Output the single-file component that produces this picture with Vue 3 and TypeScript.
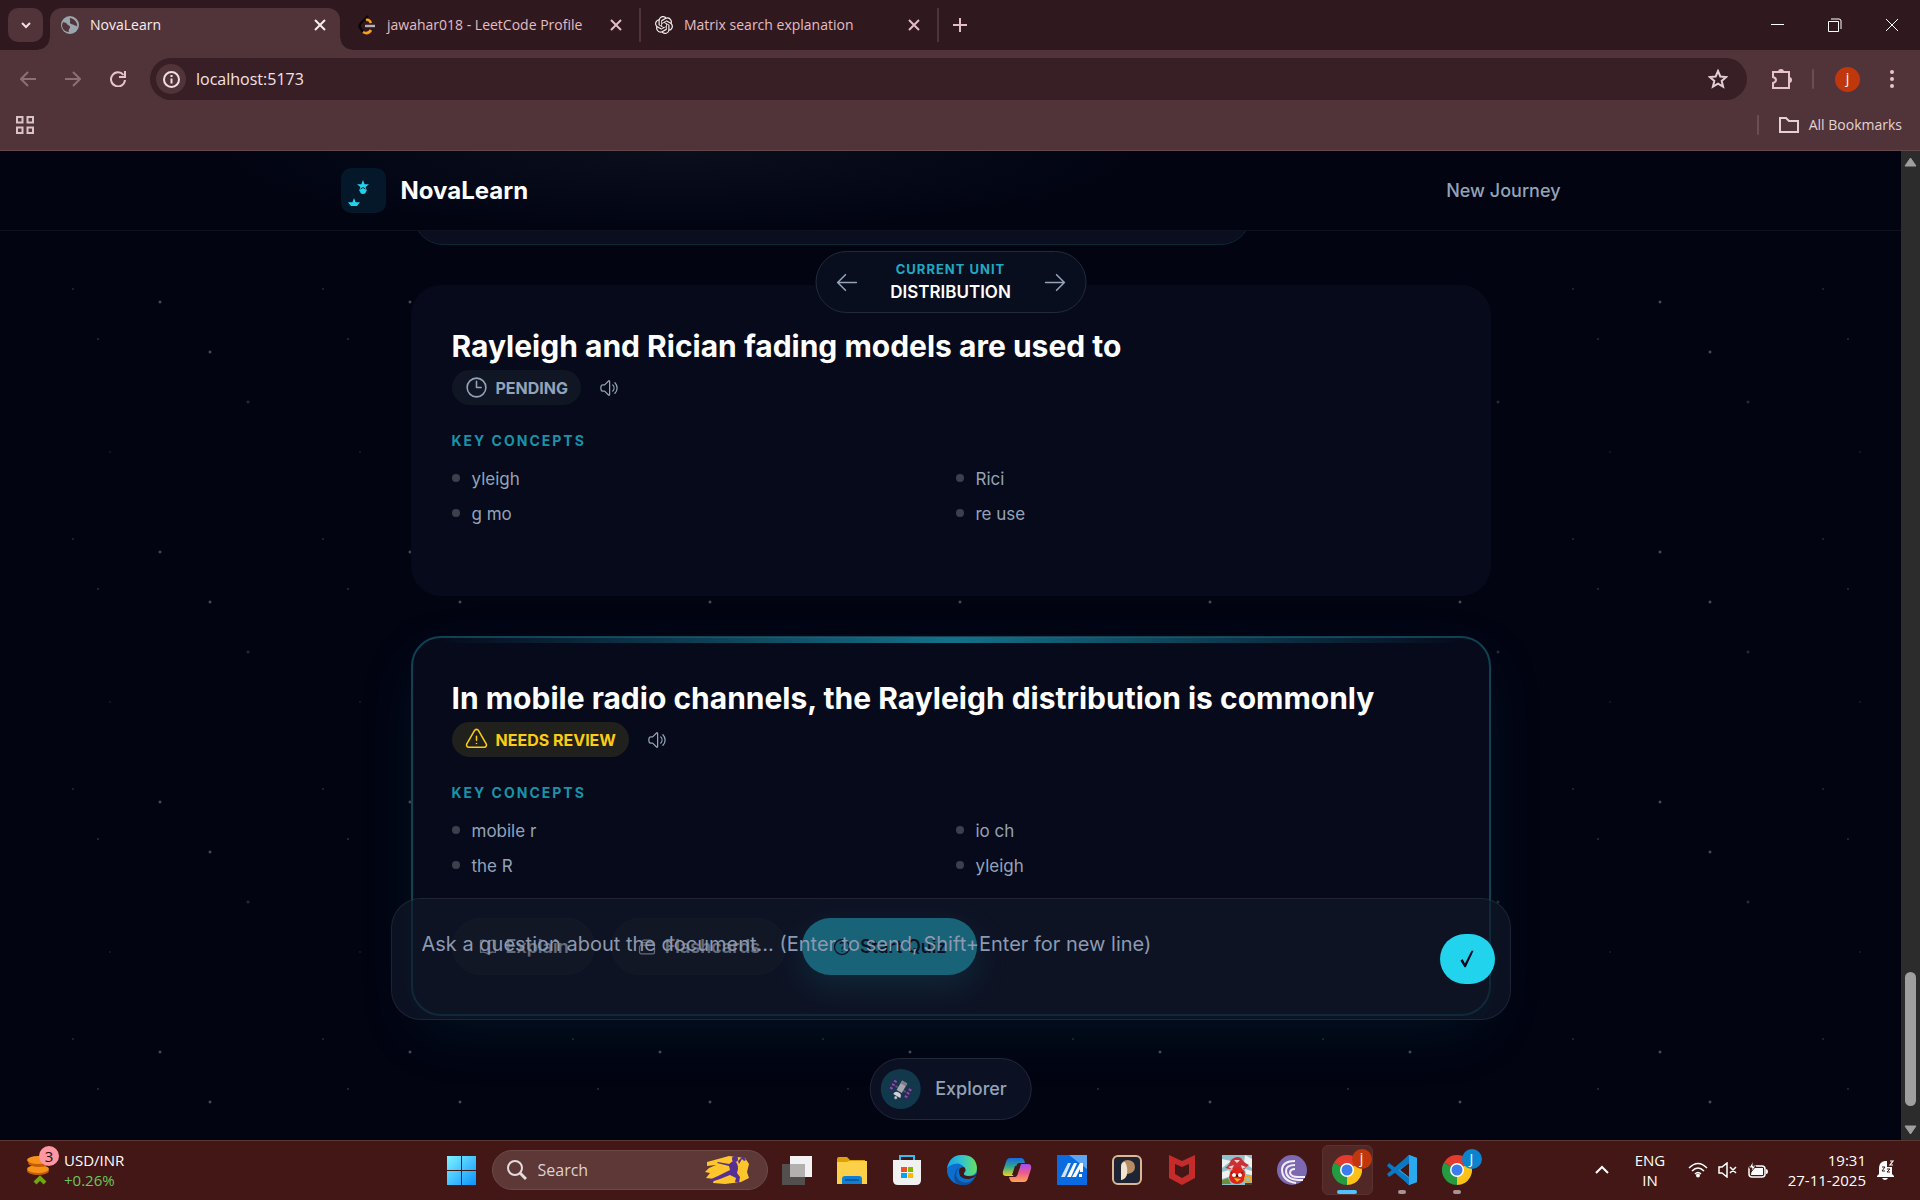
<script setup lang="ts">
import { ref } from 'vue'

interface Tab { id: string; title: string; active: boolean }
interface StudyCard {
  id: string
  title: string
  status: 'pending' | 'review'
  label: string
  concepts: string[]
  active: boolean
}

const tabs: Tab[] = [
  { id: 'nova', title: 'NovaLearn', active: true },
  { id: 'leet', title: 'jawahar018 - LeetCode Profile', active: false },
  { id: 'gpt', title: 'Matrix search explanation', active: false },
]

const cards: StudyCard[] = [
  {
    id: 'fading',
    title: 'Rayleigh and Rician fading models are used to',
    status: 'pending',
    label: 'PENDING',
    concepts: ['yleigh', 'Rici', 'g mo', 're use'],
    active: false,
  },
  {
    id: 'channels',
    title: 'In mobile radio channels, the Rayleigh distribution is commonly',
    status: 'review',
    label: 'NEEDS REVIEW',
    concepts: ['mobile r', 'io ch', 'the R', 'yleigh'],
    active: true,
  },
]

const icons = {
  clock: 'M12 6v6h4.5m4.5 0a9 9 0 1 1-18 0 9 9 0 0 1 18 0Z',
  warning: 'M12 9v3.75m-9.303 3.376c-.866 1.5.217 3.374 1.948 3.374h14.71c1.73 0 2.813-1.874 1.948-3.374L13.949 3.378c-.866-1.5-3.032-1.5-3.898 0L2.697 16.126ZM12 15.75h.007v.008H12v-.008Z',
  speaker: 'M19.114 5.636a9 9 0 0 1 0 12.728M16.463 8.288a5.25 5.25 0 0 1 0 7.424M6.75 8.25l4.72-4.72a.75.75 0 0 1 1.28.53v15.88a.75.75 0 0 1-1.28.53l-4.72-4.72H4.51c-.88 0-1.704-.507-1.938-1.354A9.009 9.009 0 0 1 2.25 12c0-.83.112-1.633.322-2.396C2.806 8.756 3.63 8.25 4.51 8.25H6.75Z',
  left: 'M10.5 19.5 3 12m0 0 7.5-7.5M3 12h18',
  right: 'M13.5 4.5 21 12m0 0-7.5 7.5M21 12H3',
  book: 'M12 6.042A8.967 8.967 0 0 0 6 3.75c-1.052 0-2.062.18-3 .512v14.25A8.987 8.987 0 0 1 6 18c2.305 0 4.408.867 6 2.292m0-14.25a8.966 8.966 0 0 1 6-2.292c1.052 0 2.062.18 3 .512v14.25A8.987 8.987 0 0 0 18 18a8.967 8.967 0 0 0-6 2.292m0-14.25v14.25',
  stack: 'M6 6.878V6a2.25 2.25 0 0 1 2.25-2.25h7.5A2.25 2.25 0 0 1 18 6v.878m-12 0c.235-.083.487-.128.75-.128h10.5c.263 0 .515.045.75.128m-12 0A2.25 2.25 0 0 0 4.5 9v.878m13.5-3A2.25 2.25 0 0 1 19.5 9v.878m0 0a2.246 2.246 0 0 0-.75-.128H5.25c-.263 0-.515.045-.75.128m15 0A2.25 2.25 0 0 1 21 12v6a2.25 2.25 0 0 1-2.25 2.25H5.25A2.25 2.25 0 0 1 3 18v-6c0-.98.626-1.813 1.5-2.122',
  question: 'M9.879 7.519c1.171-1.025 3.071-1.025 4.242 0 1.172 1.025 1.172 2.687 0 3.712-.203.179-.43.326-.67.442-.745.361-1.45.999-1.45 1.827v.75M21 12a9 9 0 1 1-18 0 9 9 0 0 1 18 0Zm-9 5.25h.008v.008H12v-.008Z',
}

const address = ref('localhost:5173')
const question = ref('')
</script>

<template>
  <div class="desktop">
    <div class="tabstrip">
      <button class="tab-search" aria-label="Search tabs">
        <svg width="14" height="14" viewBox="0 0 14 14"><path d="M3 5l4 4 4-4" class="stroke-2" /></svg>
      </button>
      <div v-for="tab in tabs" :key="tab.id" class="tab" :class="{ 'tab-active': tab.active }">
        <svg v-if="tab.id === 'nova'" width="18" height="18" viewBox="0 0 18 18">
          <circle cx="9" cy="9" r="9" fill="#9aa5ad" />
          <path d="M2 6c2 1 3 0 4 2s3 1 3 3-2 2-1 5c-4 0-7-3-7-7z" fill="#503439" />
          <path d="M9 2c-1 2 1 2 0 4s3 2 4 3 3 0 3 2c1-4-2-8-7-9z" fill="#503439" />
        </svg>
        <svg v-else-if="tab.id === 'leet'" width="18" height="20" viewBox="0 0 18 20">
          <path d="M10 1L3 8q-3 3 0 6l2 3" fill="none" stroke="#0b0708" stroke-width="2.4" />
          <path d="M8 5q3-1 5 3M5 17q5 3 8-2" fill="none" stroke="#f5a11a" stroke-width="2.6" />
          <path d="M7 11h10" stroke="#b6b3b4" stroke-width="2.4" />
        </svg>
        <svg v-else width="18" height="18" viewBox="0 0 24 24">
          <path fill="#f6eef0" d="M22.28 9.82a5.98 5.98 0 0 0-.52-4.91 6.05 6.05 0 0 0-6.51-2.9A6.07 6.07 0 0 0 4.98 4.18a5.98 5.98 0 0 0-4 2.9 6.05 6.05 0 0 0 .74 7.1 5.98 5.98 0 0 0 .51 4.91 6.05 6.05 0 0 0 6.51 2.9A5.98 5.98 0 0 0 13.26 24a6.06 6.06 0 0 0 5.77-4.21 5.99 5.99 0 0 0 4-2.9 6.06 6.06 0 0 0-.75-7.07zm-9.02 12.61a4.48 4.48 0 0 1-2.88-1.04l.14-.08 4.78-2.76a.8.8 0 0 0 .39-.68v-6.74l2.02 1.17a.07.07 0 0 1 .04.05v5.58a4.5 4.5 0 0 1-4.49 4.5zM3.6 18.3a4.47 4.47 0 0 1-.54-3.01l.15.08 4.78 2.76a.77.77 0 0 0 .78 0l5.84-3.37v2.33a.08.08 0 0 1-.03.06L9.74 19.95a4.5 4.5 0 0 1-6.14-1.65zM2.34 7.9a4.49 4.49 0 0 1 2.37-1.97v5.67a.77.77 0 0 0 .39.68l5.81 3.35-2.02 1.17a.08.08 0 0 1-.07 0l-4.83-2.79A4.5 4.5 0 0 1 2.34 7.9zm16.6 3.85L13.1 8.36l2.02-1.16a.08.08 0 0 1 .07 0l4.83 2.79a4.49 4.49 0 0 1-.68 8.1v-5.68a.79.79 0 0 0-.4-.66zm2.01-3.02l-.14-.09-4.77-2.78a.78.78 0 0 0-.79 0L9.41 9.23V6.9a.07.07 0 0 1 .03-.06l4.83-2.79a4.5 4.5 0 0 1 6.68 4.66zM8.31 12.86l-2.02-1.16a.08.08 0 0 1-.04-.06V6.07a4.5 4.5 0 0 1 7.38-3.45l-.14.08L8.7 5.46a.8.8 0 0 0-.39.68zm1.09-2.36l2.6-1.5 2.61 1.5v3l-2.6 1.5-2.6-1.5z" />
        </svg>
        <span class="tab-title">{{ tab.title }}</span>
        <button class="tab-close" :aria-label="'Close ' + tab.title">
          <svg width="12" height="12" viewBox="0 0 12 12"><path d="M1 1l10 10M11 1L1 11" class="stroke-2" /></svg>
        </button>
      </div>
      <button class="new-tab" aria-label="New tab">
        <svg width="14" height="14" viewBox="0 0 14 14"><path d="M7 0v14M0 7h14" class="stroke-2" /></svg>
      </button>
      <div class="window-controls">
        <button aria-label="Minimize"><svg width="14" height="14" viewBox="0 0 14 14"><path d="M0 6.5h13" /></svg></button>
        <button aria-label="Restore"><svg width="14" height="14" viewBox="0 0 14 14"><path d="M.5 3.5h10v10h-10zM3 1h8q2 0 2 2v8" /></svg></button>
        <button aria-label="Close"><svg width="14" height="14" viewBox="0 0 14 14"><path d="M1 1l12 12M13 1L1 13" /></svg></button>
      </div>
    </div>

    <div class="toolbar">
      <button class="tool dim" aria-label="Back"><svg width="16" height="16" viewBox="0 0 16 16"><path d="M16 8H2M8 1L1 8l7 7" class="stroke-2" /></svg></button>
      <button class="tool dim" aria-label="Forward"><svg width="16" height="16" viewBox="0 0 16 16"><path d="M0 8h14M8 1l7 7-7 7" class="stroke-2" /></svg></button>
      <button class="tool" aria-label="Reload"><svg width="16" height="16" viewBox="0 0 16 16"><path d="M13.5 4A7 7 0 1 0 15 9M15 0v6H9" class="stroke-2" /></svg></button>
      <div class="omnibox">
        <button class="site-info" aria-label="Site information">
          <svg width="17" height="17" viewBox="0 0 17 17"><circle cx="8.500" cy="8.500" r="7.500" class="stroke-2" /><path d="M8.500 7.500v5M8.500 4v2" class="stroke-2" /></svg>
        </button>
        <input v-model="address" aria-label="Address" />
        <button class="star" aria-label="Bookmark this tab">
          <svg width="20" height="20" viewBox="0 0 20 20"><path d="M10 2l2.300 5.500 5.900.5-4.500 3.900 1.400 5.800-5.100-3.100-5.100 3.100 1.400-5.800L1.800 8l5.900-.5z" class="stroke-2" /></svg>
        </button>
      </div>
      <button class="tool extension" aria-label="Extensions">
        <svg width="22" height="22" viewBox="0 0 22 22"><path d="M2 4h16v16H2v-5q3-1 3-3T2 9z" class="stroke-2" /><path d="M7 4q0-3 3-3t3 3zM18 9q3 0 3 3t-3 3z" fill="currentColor" /></svg>
      </button>
      <span class="divider"></span>
      <button class="avatar" aria-label="Profile">j</button>
      <button class="tool more" aria-label="Menu">
        <svg width="6" height="20" viewBox="0 0 6 20"><g fill="currentColor"><circle cx="3" cy="3" r="2" /><circle cx="3" cy="10" r="2" /><circle cx="3" cy="17" r="2" /></g></svg>
      </button>
    </div>

    <div class="bookmarks">
      <button class="tool apps" aria-label="Apps">
        <svg width="18" height="18" viewBox="0 0 18 18"><path d="M1 1h5.500v5.500H1zM11.500 1H17v5.500h-5.500zM1 11.500h5.500V17H1zM11.500 11.500H17V17h-5.500z" class="stroke-2" /></svg>
      </button>
      <span class="divider"></span>
      <button class="all-bookmarks">
        <svg width="22" height="18" viewBox="0 0 22 18"><path d="M2 2h6l3 3h9v11H2z" class="stroke-2" /></svg>
        All Bookmarks
      </button>
    </div>

    <div class="browser-page">
      <div class="viewport">
        <header class="site-header">
          <div class="site-header-inner">
            <a href="#" class="brand">
              <span class="brand-mark">
                <svg width="45" height="45" viewBox="0 0 45 45" fill="#22d3ee">
                  <path d="M22 12l1.600 4.200H28l-3.300 2.800 1.300 4.500-4-2.500-4 2.500 1.300-4.500L16 16.200h4.400z" />
                  <circle cx="22" cy="23" r="3" />
                  <path d="M19.500 21q2.500-3 5 0" fill="none" stroke="#06192a" />
                  <path d="M13 30l1.600 4.200H19l-3 3.800h-6l-3-3.800h4.400z" />
                </svg>
              </span>
              NovaLearn
            </a>
            <a href="#" class="nav-link">New Journey</a>
          </div>
        </header>

        <main class="content">
          <div class="bubble"></div>
          <section v-for="card in cards" :key="card.id" class="card" :class="{ 'card-active': card.active }">
            <h2>{{ card.title }}</h2>
            <div class="meta">
              <span class="badge" :class="card.status">
                <svg width="25" height="25" viewBox="0 0 24 24"><path :d="card.status === 'pending' ? icons.clock : icons.warning" class="outline" /></svg>
                {{ card.label }}
              </span>
              <button class="listen" aria-label="Read aloud">
                <svg width="20" height="20" viewBox="0 0 24 24"><path :d="icons.speaker" class="outline" /></svg>
              </button>
            </div>
            <h3>KEY CONCEPTS</h3>
            <ul>
              <li v-for="concept in card.concepts" :key="concept">{{ concept }}</li>
            </ul>
            <div v-if="card.active" class="actions">
              <button class="ghost"><svg width="20" height="20" viewBox="0 0 24 24"><path :d="icons.book" class="outline" /></svg>Explain</button>
              <button class="ghost"><svg width="20" height="20" viewBox="0 0 24 24"><path :d="icons.stack" class="outline" /></svg>Flashcards</button>
              <button class="primary"><svg width="20" height="20" viewBox="0 0 24 24"><path :d="icons.question" class="outline" /></svg>Start Quiz</button>
            </div>
          </section>
        </main>

        <nav class="unit-pill" aria-label="Units">
          <button aria-label="Previous unit"><svg width="25" height="25" viewBox="0 0 24 24"><path :d="icons.left" class="outline" /></svg></button>
          <div class="unit-text">
            <span class="unit-label">CURRENT UNIT</span>
            <span class="unit-name">DISTRIBUTION</span>
          </div>
          <button aria-label="Next unit"><svg width="25" height="25" viewBox="0 0 24 24"><path :d="icons.right" class="outline" /></svg></button>
        </nav>

        <form class="composer" @submit.prevent>
          <textarea v-model="question" aria-label="Question" placeholder="Ask a question about the document... (Enter to send, Shift+Enter for new line)"></textarea>
          <button class="send" aria-label="Send">
            <svg width="16" height="18" viewBox="0 0 18 22"><path d="M1 13l2.500-2 3 5.500L14.500 1H17L7.500 21H6z" fill="#020617" /></svg>
          </button>
        </form>

        <button class="explorer">
          <span class="explorer-icon">
            <svg width="24" height="24" viewBox="0 0 24 24">
              <g transform="rotate(30 12 12)">
                <path d="M1 6h5v12H1zM18 6h5v12h-5z" fill="#33254f" />
                <path d="M2 7h3v2H2zM2 11h3v2H2zM2 15h3v2H2zM19 7h3v2h-3zM19 11h3v2h-3zM19 15h3v2h-3z" fill="#7a55b5" />
                <path d="M6 11h3v2H6zM15 11h3v2h-3z" fill="#5a5166" />
                <path d="M9 4h6v11H9z" fill="#a9a4b0" /><path d="M9 4h6v3H9z" fill="#7f7a88" />
                <path d="M8 20q0-4 4-4t4 4z" fill="#d5d0dc" /><circle cx="12" cy="22" r="1.500" fill="#b9b3c2" />
              </g>
            </svg>
          </span>
          Explorer
        </button>
      </div>

      <div class="scrollbar" aria-hidden="true">
        <svg width="13" height="10" viewBox="0 0 13 10"><path d="M6.500 1L12 9H1z" class="scroll-arrow" /></svg>
        <span class="thumb"></span>
        <svg width="13" height="10" viewBox="0 0 13 10"><path d="M6.500 9L12 1H1z" class="scroll-arrow" /></svg>
      </div>
    </div>

    <footer class="taskbar">
      <button class="widget">
        <span class="coins">
          <svg width="24" height="30" viewBox="0 0 24 30">
            <ellipse cx="12" cy="16" rx="11" ry="4" fill="#c65c05" /><ellipse cx="12" cy="14" rx="11" ry="4" fill="#f6921a" />
            <ellipse cx="13" cy="8" rx="11" ry="4" fill="#c65c05" /><ellipse cx="12" cy="5" rx="11" ry="4" fill="#f6921a" />
            <path d="M9 28l5-5 5 5" fill="none" stroke="#6fa80c" stroke-width="4" />
          </svg>
          <span class="count">3</span>
        </span>
        <span class="rate"><span>USD/INR</span><span class="up">+0.26%</span></span>
      </button>

      <div class="apps-row">
        <button class="app start" aria-label="Start">
          <svg width="30" height="30" viewBox="0 0 30 30">
            <defs><linearGradient id="win" x1="0" y1="0" x2="1" y2="1"><stop stop-color="#7ff3ff" /><stop offset="1" stop-color="#0a94ff" /></linearGradient></defs>
            <path d="M1 1h14v14H1zM16 1h14v14H16zM1 16h14v14H1zM16 16h14v14H16z" fill="url(#win)" />
          </svg>
        </button>
        <label class="search">
          <svg width="20" height="20" viewBox="0 0 20 20"><circle cx="8" cy="8" r="7" fill="none" stroke="#e3dcdc" stroke-width="2" /><path d="M13 13l6 6" stroke="#e3dcdc" stroke-width="3" /></svg>
          <input type="text" placeholder="Search" />
          <svg width="46" height="32" viewBox="0 0 46 32">
            <path d="M3 8l22-6 16 2 4 6-2 8 2 6-8 4-16 2-12-1 1-4-8-1 4-5-5-1 4-4 7-3-9 1z" fill="#ffc52d" />
            <circle cx="31" cy="5" r="3" fill="#553092" />
            <path d="M29 7q5 0 5 8l-1 4 3 4-1 6-4-1 1-4-6-3-10 4-9 3-2-2 9-4 12-6-1-4-12-3 1-1 11 2zM34 7l5-5 3 4-2 1-2-2-3 5z" fill="#553092" />
          </svg>
        </label>
        <button class="app" aria-label="Task view">
          <svg width="30" height="30" viewBox="0 0 30 30"><path d="M8 1h22v21H8z" fill="#f2f2f2" /><path d="M0 9h23v21H0z" fill="#555" fill-opacity=".9" /><path d="M8 9h15v13H8z" fill="#b3b0b0" /></svg>
        </button>
        <button class="app" aria-label="File Explorer">
          <svg width="30" height="30" viewBox="0 0 30 30"><path d="M0 4q0-2 2-2h8l3 3h15v6H0z" fill="#e0a106" /><path d="M0 7h10l2-1h18v23H0z" fill="#fdd04a" /><path d="M5 29v-5q0-3 3-3h14q3 0 3 3v5z" fill="#0f7fd6" /><path d="M8 25h14" stroke="#0a4f91" stroke-width="1.500" /></svg>
        </button>
        <button class="app" aria-label="Store">
          <svg width="30" height="30" viewBox="0 0 30 30"><path d="M8 6V1h14v5" fill="none" stroke="#35bdf2" stroke-width="2" /><path d="M1 5h28v20q0 5-5 5H6q-5 0-5-5z" fill="#f1f1f1" /><path d="M9 12h6v5H9z" fill="#f25022" /><path d="M16 12h5v5h-5z" fill="#7fba00" /><path d="M9 18h6v5H9z" fill="#00a4ef" /><path d="M16 18h5v5h-5z" fill="#ffb900" /></svg>
        </button>
        <button class="app" aria-label="Edge">
          <svg width="30" height="30" viewBox="0 0 30 30">
            <defs><linearGradient id="edge"><stop stop-color="#1c9fe0" /><stop offset=".5" stop-color="#32c4cf" /><stop offset="1" stop-color="#68e05a" /></linearGradient></defs>
            <circle cx="15" cy="15" r="15" fill="#0b6fd0" />
            <path d="M0 13Q3 0 15 0q14 0 15 13 0 8-9 8-5 0-4-3 3-3 0-6-4-5-10-3-4 1-7 4z" fill="url(#edge)" />
            <path d="M12 12q-6 8 1 14 7 4 14-2-5 8-14 6Q5 27 8 18q1-4 4-6z" fill="#0f4f9c" />
            <path d="M17 12q3 3 0 6-1 3 4 3 5 1 9-2-2 4-8 5-9 0-10-6-1-6 5-6z" fill="#421715" />
          </svg>
        </button>
        <button class="app" aria-label="Copilot">
          <svg width="30" height="30" viewBox="0 0 30 30">
            <defs>
              <linearGradient id="cop1" x1="0" y1="0" x2="0" y2="1"><stop stop-color="#1668e0" /><stop offset=".5" stop-color="#34a98c" /><stop offset="1" stop-color="#f4d21b" /></linearGradient>
              <linearGradient id="cop2" x1="0" y1="0" x2="0" y2="1"><stop stop-color="#a14df0" /><stop offset=".5" stop-color="#ee5a8c" /><stop offset="1" stop-color="#ffa552" /></linearGradient>
            </defs>
            <path d="M8 3h11q3 0 4 5h-6q-2 0-3 4l-3 9H4q-4 0-3-5L4 7q1-4 4-4z" fill="url(#cop1)" />
            <path d="M22 27H11q-3 0-4-5h6q2 0 3-4l3-9h7q4 0 3 5l-3 9q-1 4-4 4z" fill="url(#cop2)" />
            <path d="M13 11h5l-3 9h-5z" fill="#421715" />
          </svg>
        </button>
        <button class="app" aria-label="MyASUS">
          <svg width="30" height="30" viewBox="0 0 30 30"><path d="M0 0h30v30H0z" fill="#0a6be0" /><path d="M12 0h18v14z" fill="#5ba7f3" /><path d="M4 22l7-14h3L8 22z" fill="#cfe4fb" /><path d="M10 22l7-14h3l-6 14z" fill="#fff" /><path d="M15 22l8-14h3v9h-3v-3l-4 8zM22 19h3v3h-3z" fill="#fff" /></svg>
        </button>
        <button class="app" aria-label="Media player">
          <svg width="30" height="30" viewBox="0 0 30 30"><rect x="1" y="1" width="28" height="28" rx="5" fill="#1d2433" stroke="#dcb795" stroke-width="2" /><path d="M9 25V12q0-7 7-7 7 1 7 7 0 6-8 7-1 5-6 6z" fill="#b98b63" /><path d="M9 25V12q0-5 4-5 3 5 2 12-1 5-6 6z" fill="#f3e3cf" /></svg>
        </button>
        <button class="app" aria-label="McAfee">
          <svg width="30" height="30" viewBox="0 0 30 30"><path d="M2 0l13 6 13-6v23l-13 7-13-7zM8 9v10l7 4 7-4V9l-7 3z" fill="#c52b2b" fill-rule="evenodd" /></svg>
        </button>
        <button class="app" aria-label="Game">
          <svg width="30" height="30" viewBox="0 0 30 30">
            <path d="M0 0h30v30H0z" fill="#8fc0cb" />
            <path d="M0 4l9 2-9 7zM23 0l7 4v9l-8-5zM0 17l7-2 2 6-9 3zM23 14l7 2v4l-6-1z" fill="#eef1f0" />
            <path d="M3 13q4-2 6-8 5-5 10-2 3 5 8 7l-5 4H8z" fill="#c9303a" />
            <path d="M12 5h6l-3 3zM6 12l6-2-2 4zM19 10l5 2-4 2z" fill="#f1d5bd" />
            <path d="M7 22q1-9 9-10 8 2 7 10-1 7-8 7-7 0-8-7z" fill="#dc241b" />
            <path d="M9 17l6 3 6-3-1 2-5 3-5-3z" fill="#2c0f10" /><circle cx="12" cy="20" r="2" fill="#fff" /><circle cx="18" cy="20" r="2" fill="#fff" />
            <path d="M12 23l7 1-4 3z" fill="#f5b21b" />
            <circle cx="26" cy="24" r="3" fill="none" stroke="#e8a823" stroke-width="2" /><path d="M0 25l6-2 3 6H0z" fill="#6e8c3d" /><path d="M23 28h7v2h-7z" fill="#4a3b2c" />
          </svg>
        </button>
        <button class="app" aria-label="BitTorrent">
          <svg width="30" height="30" viewBox="0 0 30 30"><circle cx="15" cy="15" r="15" fill="#7c69b1" /><g fill="none" stroke="#f1eef8" stroke-width="2"><path d="M18 6Q6 6 5 14q0 12 14 14M18 10q-9 0-9 6 0 8 12 9h5M18 14q-5 0-5 4 1 4 8 4h7" /></g></svg>
        </button>
        <button class="app current" aria-label="Chrome, profile j">
          <svg width="30" height="30" viewBox="0 0 30 30"><path d="M15 15L2 7.500A15 15 0 0 1 28 7.500z" fill="#e33b2e" /><path d="M15 15L28 7.500A15 15 0 0 1 15 30z" fill="#fbc116" /><path d="M15 15v15A15 15 0 0 1 2 7.500z" fill="#249a41" /><circle cx="15" cy="15" r="7" fill="#fff" /><circle cx="15" cy="15" r="5.500" fill="#3b7ded" /></svg>
          <span class="profile orange">j</span>
          <span class="indicator wide"></span>
        </button>
        <button class="app" aria-label="Visual Studio Code">
          <svg width="30" height="30" viewBox="0 0 30 30"><path d="M22 0l8 3v24l-8 3L7 15z" fill="#2aa9ee" /><path d="M22 8v14l-9-7z" fill="#421715" /><path d="M2 8l20 15v7L0 11zM0 19L22 0v8L2 22z" fill="#0a78c2" /><path d="M22 0l8 3v24l-8 3z" fill="#2aa9ee" /></svg>
          <span class="indicator"></span>
        </button>
        <button class="app" aria-label="Chrome, profile J">
          <svg width="30" height="30" viewBox="0 0 30 30"><path d="M15 15L2 7.500A15 15 0 0 1 28 7.500z" fill="#e33b2e" /><path d="M15 15L28 7.500A15 15 0 0 1 15 30z" fill="#fbc116" /><path d="M15 15v15A15 15 0 0 1 2 7.500z" fill="#249a41" /><circle cx="15" cy="15" r="7" fill="#fff" /><circle cx="15" cy="15" r="5.500" fill="#3b7ded" /></svg>
          <span class="profile blue">J</span>
          <span class="indicator"></span>
        </button>
      </div>

      <div class="tray">
        <button aria-label="Hidden icons"><svg width="14" height="9" viewBox="0 0 14 9"><path d="M1 8l6-6 6 6" class="stroke-2" /></svg></button>
        <button class="lang"><span>ENG</span><span>IN</span></button>
        <button class="status" aria-label="Network, sound and battery">
          <svg width="20" height="16" viewBox="0 0 20 16"><g fill="none" stroke="#fff" stroke-width="1.500"><path d="M1 6q9-9 18 0M4 9q6-6 12 0M7 12q3-3 6 0" /></g><circle cx="10" cy="13.500" r="2" fill="#fff" /></svg>
          <svg width="20" height="16" viewBox="0 0 20 16"><path d="M1 5h3l5-4v14l-5-4H1zM12 5l6 6M18 5l-6 6" fill="none" stroke="#fff" stroke-width="1.500" /></svg>
          <svg width="21" height="18" viewBox="0 0 21 18"><rect x="1" y="5" width="16" height="11" rx="3" fill="none" stroke="#fff" stroke-width="1.500" /><path d="M4 7h11v7H3zM18 8q2 0 2 2.500T18 13z" fill="#fff" /><path d="M5 0L1 7h3l-1 4 5-6H5z" fill="#fff" stroke="#421715" /></svg>
        </button>
        <button class="clock"><span>19:31</span><span>27-11-2025</span></button>
        <button aria-label="Notifications">
          <svg width="18" height="20" viewBox="0 0 18 20"><path d="M2 14V8q0-6 6-7h2v6h5v7l2 2v1H0v-1zM5 18h6q-1 2-3 2t-3-2z" fill="#fff" /><path d="M13 1h3l-3 4h3" fill="none" stroke="#fff" stroke-width="1.200" /><path d="M5 7h3l-3 4h3M10 9h3l-3 3h3" fill="none" stroke="#421715" /></svg>
        </button>
      </div>
    </footer>
  </div>
</template>

<style>
body {
  margin: 0;
  overflow: hidden;
  background: #020412;
}
</style>

<style scoped>
* { box-sizing: border-box; }
button, input, textarea { font: inherit; color: inherit; background: none; border: 0; padding: 0; margin: 0; outline: 0; }
button { display: flex; align-items: center; justify-content: center; flex: none; white-space: nowrap; }
svg { display: block; flex: none; }
a { color: inherit; text-decoration: none; }
.stroke-2 { fill: none; stroke: currentColor; stroke-width: 2; }
.outline { fill: none; stroke: currentColor; stroke-width: 1.5; stroke-linecap: round; stroke-linejoin: round; }

.desktop {
  display: flex;
  flex-direction: column;
  height: 100vh;
  font: 14px/20px "Open Sans", "Noto Sans", sans-serif;
  color: #f0dfe2;
}

/* browser frame */
.tabstrip { display: flex; align-items: flex-start; height: 50px; padding: 8px 0 0 8px; background: #30191e; }
.tab-search { width: 35px; height: 34px; border-radius: 10px; background: #503439; margin-right: 7px; }
.tab { display: flex; align-items: center; width: 301px; height: 34px; padding: 0 17px 0 18px; gap: 11px; color: #e3bdc5; border-right: 2px solid #503439; }
.tab:last-of-type { border-color: #503439; }
.tab + .tab + .tab { width: 298px; padding-left: 14px; }
.tab-active { position: relative; width: 290px; height: 42px; padding: 0 14px 8px 11px; border: 0; border-radius: 12px 12px 0 0; background: #503439; color: #f7edef; }
.tab-active::before, .tab-active::after { content: ""; position: absolute; bottom: 0; width: 12px; height: 12px; }
.tab-active::before { left: -12px; background: radial-gradient(circle at 0 0, transparent 11px, #503439 12px); }
.tab-active::after { right: -12px; background: radial-gradient(circle at 100% 0, transparent 11px, #503439 12px); }
.tab-title { flex: 1; white-space: nowrap; }
.new-tab { width: 42px; height: 34px; color: #e3bdc5; }
.window-controls { display: flex; margin-left: auto; }
.window-controls button { width: 57px; height: 34px; color: #fff; }
.window-controls path { fill: none; stroke: currentColor; stroke-width: 1; }

.toolbar { display: flex; align-items: center; height: 58px; padding: 0 8px 0 5px; background: #503439; }
.tool { width: 45px; height: 40px; color: #e9c3ca; }
.tool.dim { color: #8d6e75; }
.omnibox { display: flex; align-items: center; flex: 1; height: 42px; margin-left: 10px; padding: 0 19px 0 6px; border-radius: 21px; background: #381f25; }
.site-info { width: 30px; height: 30px; border-radius: 15px; background: #503439; }
.omnibox input { flex: 1; margin-left: 10px; font-size: 16px; color: #f2e2e5; }
.star { color: #e3cfd3; }
.extension { margin-left: 12px; }
.divider { width: 2px; height: 20px; border-radius: 1px; background: #6d4d53; }
.toolbar .divider { margin: 0 21px 0 8px; }
.avatar { width: 25px; height: 25px; padding-bottom: 2px; border-radius: 50%; background: #c0370c; color: #fff; }
.more { width: 40px; margin-left: 12px; }
.bookmarks { display: flex; align-items: center; height: 43px; padding: 0 18px 8px 2px; background: #503439; border-bottom: 1px solid #65484a; }
.apps { margin-right: auto; color: #d9c3c7; }
.bookmarks .divider { margin-right: 19px; }
.all-bookmarks { gap: 9px; color: #e3d2d5; }

/* web page */
.browser-page { display: flex; flex: 1; min-height: 0; }
.viewport {
  position: relative;
  flex: 1;
  overflow: hidden;
  font-family: Inter, "Liberation Sans", sans-serif;
  color: #94a3b8;
  background-color: #020412;
  background-image:
    radial-gradient(1px 1px at 25px 38px, #5b5f6b, transparent),
    radial-gradient(1px 1px at 50px 88px, #6b6f7a, transparent),
    radial-gradient(1px 1px at 62px 201px, #3b3f4b, transparent),
    radial-gradient(2px 2px at 112px 51px, #6b6f7a, transparent),
    radial-gradient(2px 2px at 162px 101px, #6b6f7a, transparent),
    radial-gradient(2px 2px at 200px 151px, #3b3f4b, transparent);
  background-size: 250px 250px;
  background-position: 48px 100px;
}
.site-header { position: relative; z-index: 3; height: 80px; border-bottom: 1px solid #0e1220; background: radial-gradient(460px 80px at 680px 0, #0b0e1b, #030615 80%, #020412); }
.site-header-inner { display: flex; align-items: center; justify-content: space-between; max-width: 1220px; height: 79px; margin: 0 auto; }
.brand { display: flex; align-items: center; gap: 15px; font-size: 24px; font-weight: 700; color: #fff; }
.brand-mark { border-radius: 10px; background: #04182a; }
.nav-link { font-size: 18px; font-weight: 500; }

.content { display: flex; flex-direction: column; align-items: center; gap: 40px; width: 1080px; margin: 0 auto; }
.bubble { align-self: flex-start; width: 838px; height: 80px; margin: -66px 0 0 2px; border: 1px solid #0b2733; border-radius: 30px; background: #0a0e1e; }
.card { position: relative; width: 100%; padding: 41px 41px 40px; border-radius: 30px; background: #060a1a; }
.card-active { border: 2px solid #0e4254; padding: 40px 39px 39px; background: #060a1b; box-shadow: 0 20px 60px -10px rgba(8, 80, 100, .22); }
.card-active::before { content: ""; position: absolute; top: -1px; left: 24px; right: 24px; height: 6px; background: linear-gradient(90deg, transparent, #14718a, transparent); }
h2 { margin: 0; font-size: 30px; line-height: 40px; font-weight: 700; color: #fff; white-space: nowrap; }
.meta { display: flex; align-items: center; gap: 18px; height: 35px; margin-top: 4px; }
.badge { display: flex; align-items: center; gap: 7px; height: 35px; padding: 0 13px 0 12px; border-radius: 18px; font-size: 16px; font-weight: 700; }
.pending { background: #111624; color: #94a3b8; }
.review { background: #20201d; color: #facc15; }
.listen { color: #94a3b8; }
h3 { margin: 26px 0 0; font-size: 14px; line-height: 20px; font-weight: 700; letter-spacing: 2px; color: #1893aa; }
ul { display: grid; grid-template-columns: 1fr 1fr; gap: 10px; margin: 16px 0 0; padding: 0 0 29px; list-style: none; }
li { display: flex; align-items: flex-start; gap: 12px; font-size: 17px; line-height: 25px; }
li::before { content: ""; width: 8px; height: 8px; margin-top: 7px; border-radius: 50%; background: #3c404d; }
.actions { display: flex; gap: 16px; padding-top: 10px; }
.actions button { height: 57px; padding: 0 25px; gap: 8px; border-radius: 29px; font-size: 18px; font-weight: 600; }
.actions .ghost { background: #10141f; color: #e2e8f0; border: 1px solid #171b27; }
.actions .primary { padding: 0 30px; background: #22d3ee; color: #020617; box-shadow: 0 12px 30px rgba(34, 211, 238, .25); }

.unit-pill, .composer, .explorer { position: absolute; left: 50%; transform: translateX(-50%); }
.unit-pill { z-index: 4; top: 100px; display: flex; align-items: center; justify-content: space-between; width: 271px; height: 62px; padding: 0 18px; border: 1px solid #252a38; border-radius: 31px; background: #090e1f; }
.unit-text { display: flex; flex-direction: column; align-items: center; }
.unit-label { font-size: 13px; line-height: 20px; font-weight: 700; letter-spacing: 1px; color: #1fa9c2; }
.unit-name { font-size: 17px; line-height: 26px; font-weight: 600; color: #fff; }
.composer { z-index: 2; top: 747px; display: flex; align-items: flex-end; width: 1120px; height: 122px; padding: 30px 15px 35px 30px; border: 1px solid rgba(255, 255, 255, .08); border-radius: 30px; background: rgba(18, 25, 42, .6); }
.composer textarea { flex: 1; height: 100%; resize: none; overflow: hidden; font-size: 20px; line-height: 30px; }
.composer textarea::placeholder { color: #8c99b0; opacity: 1; }
.send { width: 55px; height: 50px; border-radius: 25px; background: #22d3ee; }
.explorer { z-index: 2; top: 907px; gap: 15px; height: 62px; padding: 0 24px 0 10px; border: 1px solid #232838; border-radius: 31px; background: #0b1022; font-size: 18px; font-weight: 500; }
.explorer-icon { display: flex; align-items: center; justify-content: center; width: 40px; height: 40px; border-radius: 50%; background: #12384c; }

.scrollbar { display: flex; flex-direction: column; align-items: center; width: 19px; padding: 6px 0 5px; background: #2c2c2c; }
.scroll-arrow { fill: #9f9f9f; stroke: #9f9f9f; stroke-linejoin: round; }
.thumb { width: 11px; height: 134px; margin: auto 0 19px; border-radius: 6px; background: #9f9f9f; }

/* taskbar */
.taskbar { display: flex; align-items: center; justify-content: space-between; height: 60px; padding-bottom: 2px; border-top: 1px solid #5b3632; background: #421715; color: #fff; font-size: 15px; }
.widget { gap: 14px; width: 445px; padding-left: 26px; justify-content: flex-start; }
.coins { position: relative; }
.count { position: absolute; left: 13px; top: -9px; width: 20px; height: 20px; border-radius: 50%; background: #ff97a3; color: #1d0d10; text-align: center; }
.rate, .lang, .clock { display: flex; flex-direction: column; }
.rate { align-items: flex-start; }
.up { color: #6cc65c; }
.apps-row { display: flex; align-items: center; }
.app { position: relative; width: 55px; height: 58px; }
.start { width: 30px; margin-right: 16px; }
.search { display: flex; align-items: center; gap: 11px; width: 276px; height: 40px; margin-right: 2px; padding: 0 17px 0 14px; border-radius: 20px; background: #5d3836; border: 1px solid #6d4a48; }
.search input { flex: 1; min-width: 0; font-size: 16px; }
.search input::placeholder { color: #ddd2d2; opacity: 1; }
.current::before { content: ""; position: absolute; inset: 4px 2px; border: 1px solid #5b322f; border-radius: 6px; background: #512825; }
.app svg { position: relative; }
.profile { position: absolute; top: 8px; right: 3px; width: 20px; height: 20px; border-radius: 50%; font-size: 14px; line-height: 18px; }
.orange { background: #c0370c; }
.blue { background: #0b84d0; line-height: 20px; }
.indicator { position: absolute; bottom: 5px; width: 8px; height: 4px; border-radius: 2px; background: #a89391; }
.wide { width: 20px; background: #4cc2ff; }
.tray { display: flex; align-items: center; justify-content: flex-end; width: 435px; padding-right: 25px; }
.lang { align-items: center; width: 30px; margin: 0 23px 0 26px; }
.status { gap: 10px; }
.clock { align-items: flex-end; width: 80px; margin: 0 11px 0 17px; }
</style>
